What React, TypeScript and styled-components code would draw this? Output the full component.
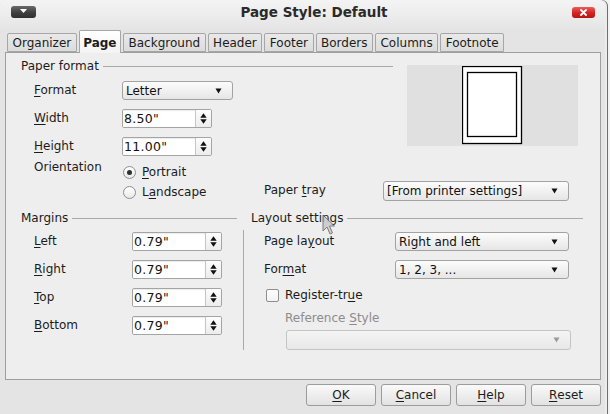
import React from "react";
import styled, { createGlobalStyle } from "styled-components";

const Global = createGlobalStyle`
  html, body { margin: 0; padding: 0; background: #f3f3f3; }
  body {
    font-family: "DejaVu Sans", "Noto Sans", sans-serif;
    font-size: 12px;
    color: #1c1c1c;
  }
  * { box-sizing: border-box; }
`;

const Window = styled.div`
  position: relative;
  width: 605px;
  height: 414px;
  background: #e4e4e4;
  border-radius: 6px 6px 0 0;
  box-shadow: 2px 0 0 #ececec, 3px 0 0 #6e6e6e;
  display: flex;
  flex-direction: column;
  overflow: hidden;
`;

const TitleBar = styled.div`
  flex: none;
  height: 29px;
  display: grid;
  grid-template-columns: 25px 1fr 23px;
  align-items: start;
  padding: 6px 10px 0 11px;
  background: linear-gradient(#f4f4f4, #e5e5e5);
`;

const MenuBtn = styled.div`
  height: 12px;
  border-radius: 3px;
  background: linear-gradient(#6a6a6a, #3f3f3f 55%, #2f2f2f);
  display: flex;
  justify-content: center;
  padding-top: 3px;
`;

const Title = styled.div`
  text-align: center;
  font-weight: bold;
  font-size: 13.5px;
  color: #2a2a2a;
  line-height: 13px;
  padding-left: 20px;
`;

const CloseBtn = styled.div`
  height: 11px;
  margin-top: 1px;
  border-radius: 3px;
  background: linear-gradient(#ee5a5a, #d62626 50%, #b31414);
  display: flex;
  align-items: center;
  justify-content: center;
`;

const Content = styled.div`
  flex: 1;
  display: flex;
  flex-direction: column;
  padding: 0 4px 0 5px;
`;

const TabRow = styled.div`
  height: 23px;
  display: flex;
  align-items: flex-end;
  gap: 2px;
  padding-left: 2px;
  position: relative;
  z-index: 1;
`;

const Tab = styled.div<{ $active?: boolean }>`
  height: ${(p) => (p.$active ? 23 : 19)}px;
  margin-bottom: ${(p) => (p.$active ? -1 : 0)}px;
  padding: ${(p) => (p.$active ? "1px 3.5px 0" : "0 4.5px")};
  border: 1px solid #a6a6a6;
  border-bottom: ${(p) => (p.$active ? "none" : "1px solid #a6a6a6")};
  border-radius: 2px 2px 0 0;
  background: ${(p) =>
    p.$active ? "linear-gradient(#ffffff, #f4f4f4)" : "linear-gradient(#e9e9e9, #dcdcdc)"};
  font-weight: ${(p) => (p.$active ? "bold" : "normal")};
  display: flex;
  align-items: center;
  color: #1c1c1c;
`;

const Panel = styled.div`
  height: 328px;
  border: 1px solid #9e9e9e;
  background: #eeeeee;
  padding: 6px 17px 0 15px;
  display: flex;
  flex-direction: column;
`;

const TopArea = styled.div`
  display: flex;
  align-items: flex-start;
`;

const PaperCol = styled.div`
  width: 372px;
  display: flex;
  flex-direction: column;
`;

const Preview = styled.div`
  width: 171px;
  height: 81px;
  margin: 6px 0 0 14px;
  background: #e0e0e0;
  display: flex;
  justify-content: center;
  align-items: center;
`;

const SectionHead = styled.div`
  height: 14px;
  display: flex;
  align-items: center;
  gap: 4px;
  line-height: 14px;
  white-space: nowrap;
`;

const Rule = styled.div`
  flex: 1;
  height: 1px;
  background: #a9a9a9;
`;

const Rows = styled.div<{ $top: number }>`
  display: flex;
  flex-direction: column;
  gap: 9px;
  margin-top: ${(p) => p.$top}px;
`;

const FieldRow = styled.div<{ $indent: number }>`
  height: 19px;
  display: flex;
  align-items: center;
  padding-left: ${(p) => p.$indent}px;
`;

const FieldLabel = styled.div<{ $w: number }>`
  width: ${(p) => p.$w}px;
  flex: none;
  margin-top: -2px;
`;

const Mn = styled.span`
  text-decoration: underline;
  text-underline-offset: 2px;
`;

const Select = styled.div<{ $w: number; $h?: number; $disabled?: boolean }>`
  width: ${(p) => p.$w}px;
  height: ${(p) => p.$h ?? 19}px;
  flex: none;
  border: 1px solid ${(p) => (p.$disabled ? "#c4c4c4" : "#a2a2a2")};
  border-radius: 3px;
  background: ${(p) =>
    p.$disabled ? "linear-gradient(#f4f4f4, #e8e8e8)" : "linear-gradient(#fcfcfc, #e6e6e6)"};
  display: flex;
  align-items: center;
  justify-content: space-between;
  padding: 0 10px 0 3px;
  color: #111;
  white-space: nowrap;
`;

const Spin = styled.div<{ $w: number }>`
  width: ${(p) => p.$w}px;
  height: 19px;
  flex: none;
  border: 1px solid #a4a4a4;
  border-radius: 2px;
  display: flex;
  overflow: hidden;
`;

const SpinInput = styled.div`
  flex: 1;
  background: #ffffff;
  box-shadow: inset 0 1px 1px rgba(0, 0, 0, 0.08);
  padding-left: 1px;
  display: flex;
  align-items: center;
  font-size: 12.5px;
  letter-spacing: 0.3px;
  color: #111;
`;

const SpinBtns = styled.div`
  width: 16px;
  flex: none;
  border-left: 1px solid #c6c6c6;
  background: linear-gradient(#fdfdfd, #ececec);
  display: flex;
  align-items: center;
  justify-content: center;
`;

const OrientBlock = styled.div`
  margin-top: 6px;
  display: flex;
  padding-left: 13px;
`;

const RadioList = styled.div`
  width: 142px;
  flex: none;
  display: flex;
  flex-direction: column;
`;

const RadioItem = styled.div`
  height: 20px;
  display: flex;
  align-items: center;
  gap: 6px;
  padding-left: 1px;
`;

const RadioCircle = styled.div<{ $checked?: boolean }>`
  width: 13px;
  height: 13px;
  border-radius: 50%;
  border: 1px solid #8e8e8e;
  background: linear-gradient(#ffffff, #e9e9e9);
  display: flex;
  align-items: center;
  justify-content: center;
  &::after {
    content: "";
    width: 5px;
    height: 5px;
    border-radius: 50%;
    background: ${(p) => (p.$checked ? "#2e2e2e" : "transparent")};
  }
`;

const TrayGroup = styled.div`
  align-self: flex-end;
  height: 20px;
  margin-bottom: 1px;
  display: flex;
  align-items: center;
`;

const BottomArea = styled.div`
  margin-top: 9px;
  display: flex;
  align-items: flex-start;
`;

const MarginsCol = styled.div`
  width: 216px;
  flex: none;
  display: flex;
  flex-direction: column;
`;

const LayoutCol = styled.div`
  width: 340px;
  margin-left: 6px;
  flex: none;
  display: flex;
  flex-direction: column;
`;

const LayoutHead = styled(SectionHead)`
  padding-left: 8px;
`;

const LayoutBody = styled.div`
  margin-top: 5px;
  height: 120px;
  border-left: 1px solid #a9a9a9;
  padding: 2px 0 0 20px;
  display: flex;
  flex-direction: column;
`;

const CheckRow = styled.div`
  margin-top: 8px;
  height: 16px;
  display: flex;
  align-items: center;
  gap: 6px;
  padding-left: 2px;
`;

const CheckBox = styled.div`
  width: 13px;
  height: 13px;
  border: 1px solid #8e8e8e;
  border-radius: 2px;
  background: linear-gradient(#ffffff, #f2f2f2);
`;

const DimLabel = styled.div`
  margin-top: 8px;
  height: 14px;
  line-height: 14px;
  padding-left: 21px;
  color: #8c8c8c;
`;

const DimSelectWrap = styled.div`
  margin-top: 5px;
  padding-left: 22px;
`;

const ButtonRow = styled.div`
  margin-top: 4px;
  display: flex;
  justify-content: flex-end;
  gap: 5px;
`;

const DlgButton = styled.div`
  width: 70px;
  height: 22px;
  border: 1px solid #9c9c9c;
  border-radius: 3px;
  background: linear-gradient(#fafafa, #e2e2e2);
  display: flex;
  align-items: center;
  justify-content: center;
  color: #1c1c1c;
`;

const Cursor = styled.svg`
  position: absolute;
  left: 322px;
  top: 214px;
  opacity: 0.85;
`;

const DropArrow = ({ dim }: { dim?: boolean }) => (
  <svg width="7" height="6" viewBox="0 0 7 6">
    <polygon points="0.5,0.5 6.5,0.5 3.5,5.5" fill={dim ? "#9a9a9a" : "#111"} />
  </svg>
);

const SpinArrows = () => (
  <svg width="7" height="11" viewBox="0 0 7 11">
    <polygon points="3.5,0.3 6.7,4.7 0.3,4.7" fill="#111" />
    <polygon points="0.3,6.3 6.7,6.3 3.5,10.7" fill="#111" />
  </svg>
);

const SpinBox = ({ w, value }: { w: number; value: string }) => (
  <Spin $w={w}>
    <SpinInput>{value}</SpinInput>
    <SpinBtns>
      <SpinArrows />
    </SpinBtns>
  </Spin>
);

const Dropdown = ({ w, h, children, disabled }: { w: number; h?: number; children?: React.ReactNode; disabled?: boolean }) => (
  <Select $w={w} $h={h} $disabled={disabled}>
    <span>{children}</span>
    <DropArrow dim={disabled} />
  </Select>
);

const tabs = ["Organizer", "Page", "Background", "Header", "Footer", "Borders", "Columns", "Footnote"];

const margins: [string, string][] = [
  ["L", "eft"],
  ["R", "ight"],
  ["T", "op"],
  ["B", "ottom"],
];

export default function App() {
  return (
    <>
      <Global />
      <Window>
        <TitleBar>
          <MenuBtn>
            <svg width="7" height="4" viewBox="0 0 7 4">
              <polygon points="0,0 7,0 3.5,4" fill="#ffffff" />
            </svg>
          </MenuBtn>
          <Title>Page Style: Default</Title>
          <CloseBtn>
            <svg width="7" height="7" viewBox="0 0 7 7">
              <path d="M1 1 L6 6 M6 1 L1 6" stroke="#ffffff" strokeWidth="1.8" strokeLinecap="round" />
            </svg>
          </CloseBtn>
        </TitleBar>
        <Content>
          <TabRow>
            {tabs.map((t) => (
              <Tab key={t} $active={t === "Page"}>
                {t}
              </Tab>
            ))}
          </TabRow>
          <Panel>
            <TopArea>
              <PaperCol>
                <SectionHead>
                  Paper format <Rule />
                </SectionHead>
                <Rows $top={8}>
                  <FieldRow $indent={13}>
                    <FieldLabel $w={88}>
                      <Mn>F</Mn>ormat
                    </FieldLabel>
                    <Dropdown w={111}>Letter</Dropdown>
                  </FieldRow>
                  <FieldRow $indent={13}>
                    <FieldLabel $w={88}>
                      <Mn>W</Mn>idth
                    </FieldLabel>
                    <SpinBox w={90} value={'8.50"'} />
                  </FieldRow>
                  <FieldRow $indent={13}>
                    <FieldLabel $w={88}>
                      <Mn>H</Mn>eight
                    </FieldLabel>
                    <SpinBox w={90} value={'11.00"'} />
                  </FieldRow>
                </Rows>
              </PaperCol>
              <Preview>
                <svg width="61" height="79" viewBox="0 0 61 79">
                  <rect x="0.5" y="0.5" width="59" height="77" fill="#ffffff" stroke="#000" strokeWidth="1.3" />
                  <rect x="5.5" y="6.5" width="49" height="64" fill="none" stroke="#000" strokeWidth="1.3" />
                </svg>
              </Preview>
            </TopArea>
            <OrientBlock>
              <FieldLabel $w={88}>Orientation</FieldLabel>
              <RadioList>
                <RadioItem>
                  <RadioCircle $checked />
                  <span>
                    <Mn>P</Mn>ortrait
                  </span>
                </RadioItem>
                <RadioItem>
                  <RadioCircle />
                  <span>
                    L<Mn>a</Mn>ndscape
                  </span>
                </RadioItem>
              </RadioList>
              <TrayGroup>
                <FieldLabel $w={119}>
                  Paper <Mn>t</Mn>ray
                </FieldLabel>
                <Dropdown w={186} h={20}>
                  [From printer settings]
                </Dropdown>
              </TrayGroup>
            </OrientBlock>
            <BottomArea>
              <MarginsCol>
                <SectionHead>
                  Margins <Rule />
                </SectionHead>
                <Rows $top={7}>
                  {margins.map(([a, b]) => (
                    <FieldRow $indent={13} key={a}>
                      <FieldLabel $w={98}>
                        <Mn>{a}</Mn>
                        {b}
                      </FieldLabel>
                      <SpinBox w={90} value={'0.79"'} />
                    </FieldRow>
                  ))}
                </Rows>
              </MarginsCol>
              <LayoutCol>
                <LayoutHead>
                  Layout settings <Rule />
                </LayoutHead>
                <LayoutBody>
                  <Rows $top={0}>
                    <FieldRow $indent={0}>
                      <FieldLabel $w={131}>
                        Page la<Mn>y</Mn>out
                      </FieldLabel>
                      <Dropdown w={174}>Right and left</Dropdown>
                    </FieldRow>
                    <FieldRow $indent={0}>
                      <FieldLabel $w={131}>
                        For<Mn>m</Mn>at
                      </FieldLabel>
                      <Dropdown w={174}>1, 2, 3, ...</Dropdown>
                    </FieldRow>
                  </Rows>
                  <CheckRow>
                    <CheckBox />
                    <span>
                      Register-tr<Mn>u</Mn>e
                    </span>
                  </CheckRow>
                  <DimLabel>
                    Reference <Mn>S</Mn>tyle
                  </DimLabel>
                  <DimSelectWrap>
                    <Dropdown w={285} h={20} disabled />
                  </DimSelectWrap>
                </LayoutBody>
              </LayoutCol>
            </BottomArea>
          </Panel>
          <ButtonRow>
            <DlgButton>
              <Mn>O</Mn>K
            </DlgButton>
            <DlgButton>
              <Mn>C</Mn>ancel
            </DlgButton>
            <DlgButton>
              <Mn>H</Mn>elp
            </DlgButton>
            <DlgButton>
              <Mn>R</Mn>eset
            </DlgButton>
          </ButtonRow>
        </Content>
        <Cursor width="14" height="22" viewBox="0 0 14 22">
          <path d="M1 1 L1 17 L5 13 L8 20 L10.5 19 L7.5 12 L12.5 12 Z" fill="#c9c9c9" stroke="#6a6a6a" strokeWidth="1" />
        </Cursor>
      </Window>
    </>
  );
}
